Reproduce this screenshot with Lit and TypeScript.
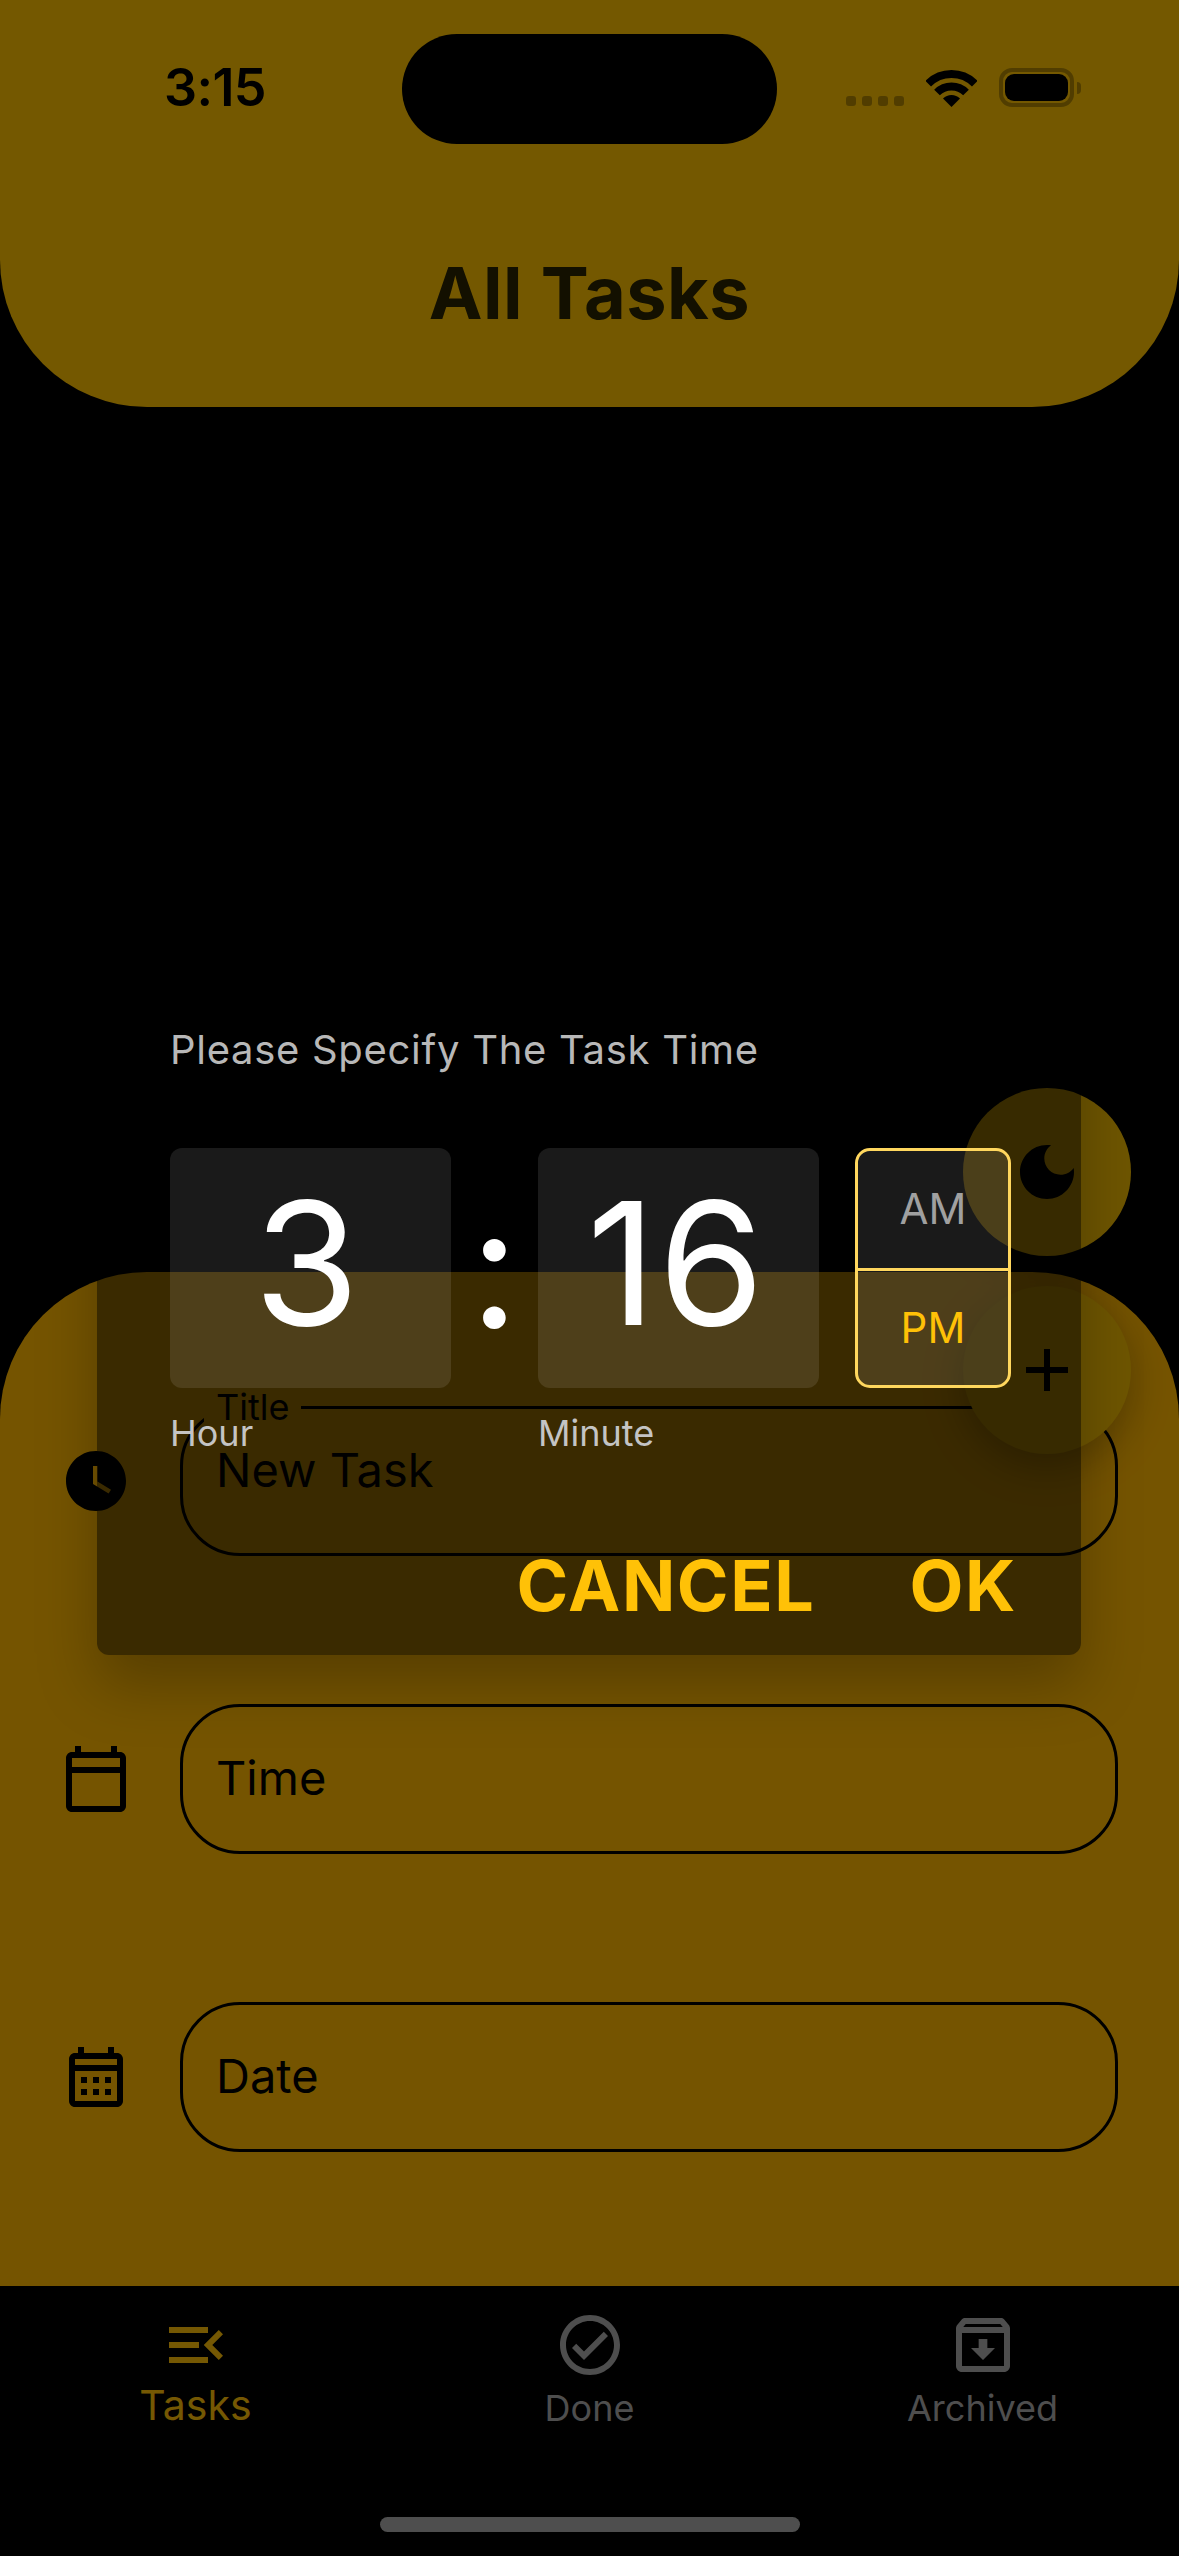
import { LitElement, html, css, svg } from "lit";
import { customElement } from "lit/decorators.js";

const ICONS: Record<string, string> = {
  clock: "M12 2C6.5 2 2 6.5 2 12s4.5 10 10 10 10-4.5 10-10S17.5 2 12 2zm4.2 14.2L11 13V7h1.5v5.2l4.5 2.7-.8 1.3z",
  today: "M20 3h-1V1h-2v2H7V1H5v2H4c-1.1 0-2 .9-2 2v16c0 1.1.9 2 2 2h16c1.1 0 2-.9 2-2V5c0-1.1-.9-2-2-2zm0 2v3H4V5h16zM4 21V10h16v11H4z",
  month: "M19 4h-1V2h-2v2H8V2H6v2H5c-1.11 0-1.99.9-1.99 2L3 20c0 1.1.89 2 2 2h14c1.1 0 2-.9 2-2V6c0-1.1-.9-2-2-2zm0 16H5V10h14v10zm0-12H5V6h14v2zM9 14H7v-2h2v2zm4 0h-2v-2h2v2zm4 0h-2v-2h2v2zm-8 4H7v-2h2v2zm4 0h-2v-2h2v2zm4 0h-2v-2h2v2z",
  moon: "M12 3c-4.97 0-9 4.03-9 9s4.03 9 9 9 9-4.03 9-9c0-.46-.04-.92-.1-1.36-.98 1.37-2.58 2.26-4.4 2.26-2.98 0-5.4-2.42-5.4-5.4 0-1.81.89-3.42 2.26-4.4-.44-.06-.9-.1-1.36-.1z",
  add: "M19 13h-6v6h-2v-6H5v-2h6V5h2v6h6v2z",
  menu: "M3 18h13v-2H3v2zm0-5h10v-2H3v2zm0-7v2h13V6H3zm18 9.59L17.42 12 21 8.41 19.59 7l-5 5 5 5L21 15.59z",
  check: "M12 2C6.48 2 2 6.48 2 12s4.48 10 10 10 10-4.48 10-10S17.52 2 12 2zm0 18c-4.41 0-8-3.59-8-8s3.59-8 8-8 8 3.59 8 8-3.59 8-8 8zm4.59-12.42L10 14.17l-2.59-2.58L6 13l4 4 8-8-1.41-1.42z",
  archive: "M20.54 5.23l-1.39-1.68C18.88 3.21 18.47 3 18 3H6c-.47 0-.88.21-1.16.55L3.46 5.23C3.17 5.57 3 6.02 3 6.5V19c0 1.1.9 2 2 2h14c1.1 0 2-.9 2-2V6.5c0-.48-.17-.93-.46-1.27zM6.24 5h11.52l.83 1H5.42l.82-1zM5 19V8h14v11H5zm8.45-9h-2.9v3H8l4 4 4-4h-2.55z",
};

const icon = (name: string) => html`<svg class="icon" viewBox="0 0 24 24"><path d=${ICONS[name]}></path></svg>`;

@customElement("app-root")
export class AppRoot extends LitElement {
  static styles = css`
    :host { display: block; width: 1179px; height: 2556px; position: relative; overflow: hidden; background: #000;
      font-family: Inter, "Liberation Sans", sans-serif; }
    .page { height: 2556px; display: flex; flex-direction: column; }
    .icon { width: 72px; height: 72px; fill: currentColor; flex: none; display: block; }

    .header { height: 407px; flex: none; background: #fcc000; border-radius: 0 0 147px 147px; color: #000; }
    .status { display: flex; align-items: flex-start; padding: 34px 0 0 164px; height: 110px; }
    .time { width: 238px; margin-top: 30px; font-size: 52px; line-height: 48px; font-weight: 600; letter-spacing: -.6px; }
    .island { width: 375px; height: 110px; border-radius: 55px; background: #000; flex: none; }
    .sys { display: flex; align-items: flex-end; margin: 34px 0 0 69px; height: 39px; }
    .dots { display: flex; gap: 6px; margin-bottom: 1px; }
    .dots i { width: 10px; height: 10px; border-radius: 3px; background: rgba(0,0,0,.3); display: block; }
    .wifi { width: 51px; height: 37px; margin: 0 22px; display: block; fill: none; stroke: #000; stroke-width: 8; }
    .wifi .w { fill: #000; stroke: none; }
    .batt { width: 75px; height: 39px; box-sizing: border-box; border: 4px solid rgba(0,0,0,.3); border-radius: 13px; padding: 2px; position: relative; }
    .batt b { display: block; height: 100%; background: #000; border-radius: 9px; }
    .batt::after { content: ""; position: absolute; right: -11px; top: 10px; width: 4px; height: 12px; background: rgba(0,0,0,.3); border-radius: 0 4px 4px 0; }
    .title { margin: 107px 0 0; text-align: center; font-size: 72px; line-height: 84px; font-weight: 700; letter-spacing: .5px; color: #2a2300; }

    .grow { flex: 1; }
    .sheet { height: 1014px; flex: none; box-sizing: border-box; background: #ffb700; border-radius: 147px 147px 0 0; padding: 113px 61px 0 60px; display: flex; flex-direction: column; gap: 148px; color: #000; }
    .row { display: flex; align-items: flex-end; gap: 48px; }
    .row .icon { margin-bottom: 39px; }
    fieldset { margin: 0; min-width: 0; flex: 1; height: 150px; box-sizing: border-box; border: 3px solid #000; border-radius: 60px; padding: 0 33px; display: flex; align-items: center; font-size: 47px; line-height: 58px; }
    fieldset.float { height: 171px; align-items: flex-start; }
    legend { margin-left: -12px; padding: 0 12px; font-size: 36px; line-height: 44px; }
    .val { margin-top: 12px; }
    fieldset span:not(.val) { margin-top: -2px; }

    .nav { height: 270px; flex: none; background: #000; position: relative; display: grid; grid-template-columns: repeat(3, 1fr); padding: 23px 0 0; box-sizing: border-box; }
    .tab { display: flex; flex-direction: column; align-items: center; color: #aaa; font-size: 36px; line-height: 44px; }
    .tab .lbl { margin-top: 5px; }
    .tab.on { color: #ffc107; font-size: 41px; padding-right: 2px; }
    .tab.on .lbl { margin-top: 2px; }
    .home { position: absolute; left: 380px; bottom: 24px; width: 420px; height: 15px; border-radius: 8px; background: #aaa; }

    .fab { position: absolute; left: 963px; width: 168px; height: 168px; border-radius: 50%; background: #efb900; color: #000; display: flex; align-items: center; justify-content: center; box-shadow: 0 12px 40px rgba(0,0,0,.28); }
    .moon { top: 1088px; }
    .plus { top: 1286px; }

    .scrim { position: absolute; inset: 0; background: rgba(0,0,0,.54); }
    .dialog { position: absolute; left: 97px; top: 960px; width: 984px; height: 695px; box-sizing: border-box; border-radius: 12px; background: rgba(0,0,0,.5); box-shadow: 0 30px 60px rgba(0,0,0,.25); padding: 66px 64px 0 73px; color: #fff; }
    .help { font-size: 40px; line-height: 48px; color: #b8b8b8; letter-spacing: .7px; }
    .picker { display: flex; margin-top: 74px; height: 240px; }
    .num { width: 281px; height: 240px; border-radius: 12px; background: rgba(255,255,255,.1); display: flex; align-items: center; justify-content: center; font-size: 171px; line-height: 1; font-weight: 380; padding-bottom: 12px; box-sizing: border-box; }
    .num.hour { padding-right: 8px; }
    .num.minute { letter-spacing: 2px; padding-right: 4px; }
    .colon { width: 87px; display: flex; align-items: center; justify-content: center; font-size: 171px; line-height: 1; font-weight: 400; padding-bottom: 6px; }
    .ampm { margin-left: 36px; width: 156px; box-sizing: border-box; border: 3px solid #ffd75e; border-radius: 15px; overflow: hidden; display: flex; flex-direction: column; font-size: 42px; }
    .ampm div { flex: 1; display: flex; align-items: center; justify-content: center; background: rgba(255,255,255,.1); color: #a0a0a0; }
    .ampm div:first-child { padding-bottom: 2px; }
    .ampm div + div { border-top: 3px solid #ffd75e; color: #ffc107; }
    .labels { display: flex; gap: 87px; margin-top: 23px; font-size: 36px; line-height: 44px; color: #c4c4c4; }
    .labels span { width: 281px; }
    .actions { display: flex; justify-content: flex-end; gap: 94px; margin-top: 89px; font-size: 70px; line-height: 84px; font-weight: 700; letter-spacing: 1.6px; color: #ffc107; }
  `;

  render() {
    return html`
      <div class="page">
        <div class="header">
          <div class="status">
            <div class="time">3:15</div>
            <div class="island"></div>
            <div class="sys">
              <div class="dots"><i></i><i></i><i></i><i></i></div>
              <svg class="wifi" viewBox="0 0 51 37">
                ${svg`<path d="M2.2 13.7A33 33 0 0 1 48.8 13.7"></path>
                <path d="M11 22.5A20.5 20.5 0 0 1 40 22.5"></path>
                <path class="w" d="M25.5 37L17 28.5A12 12 0 0 1 34 28.5Z"></path>`}
              </svg>
              <div class="batt"><b></b></div>
            </div>
          </div>
          <h1 class="title">All Tasks</h1>
        </div>
        <div class="grow"></div>
        <div class="sheet">
          <div class="row">${icon("clock")}<fieldset class="float"><legend>Title</legend><span class="val">New Task</span></fieldset></div>
          <div class="row">${icon("today")}<fieldset><span>Time</span></fieldset></div>
          <div class="row">${icon("month")}<fieldset><span>Date</span></fieldset></div>
        </div>
        <div class="nav">
          <div class="tab on">${icon("menu")}<span class="lbl">Tasks</span></div>
          <div class="tab">${icon("check")}<span class="lbl">Done</span></div>
          <div class="tab">${icon("archive")}<span class="lbl">Archived</span></div>
          <div class="home"></div>
        </div>
      </div>
      <div class="fab moon">${icon("moon")}</div>
      <div class="fab plus">${icon("add")}</div>
      <div class="scrim"></div>
      <div class="dialog">
        <div class="help">Please Specify The Task Time</div>
        <div class="picker">
          <div class="num hour">3</div>
          <div class="colon">:</div>
          <div class="num minute">16</div>
          <div class="ampm"><div>AM</div><div>PM</div></div>
        </div>
        <div class="labels"><span>Hour</span><span>Minute</span></div>
        <div class="actions"><span>CANCEL</span><span>OK</span></div>
      </div>
    `;
  }
}
